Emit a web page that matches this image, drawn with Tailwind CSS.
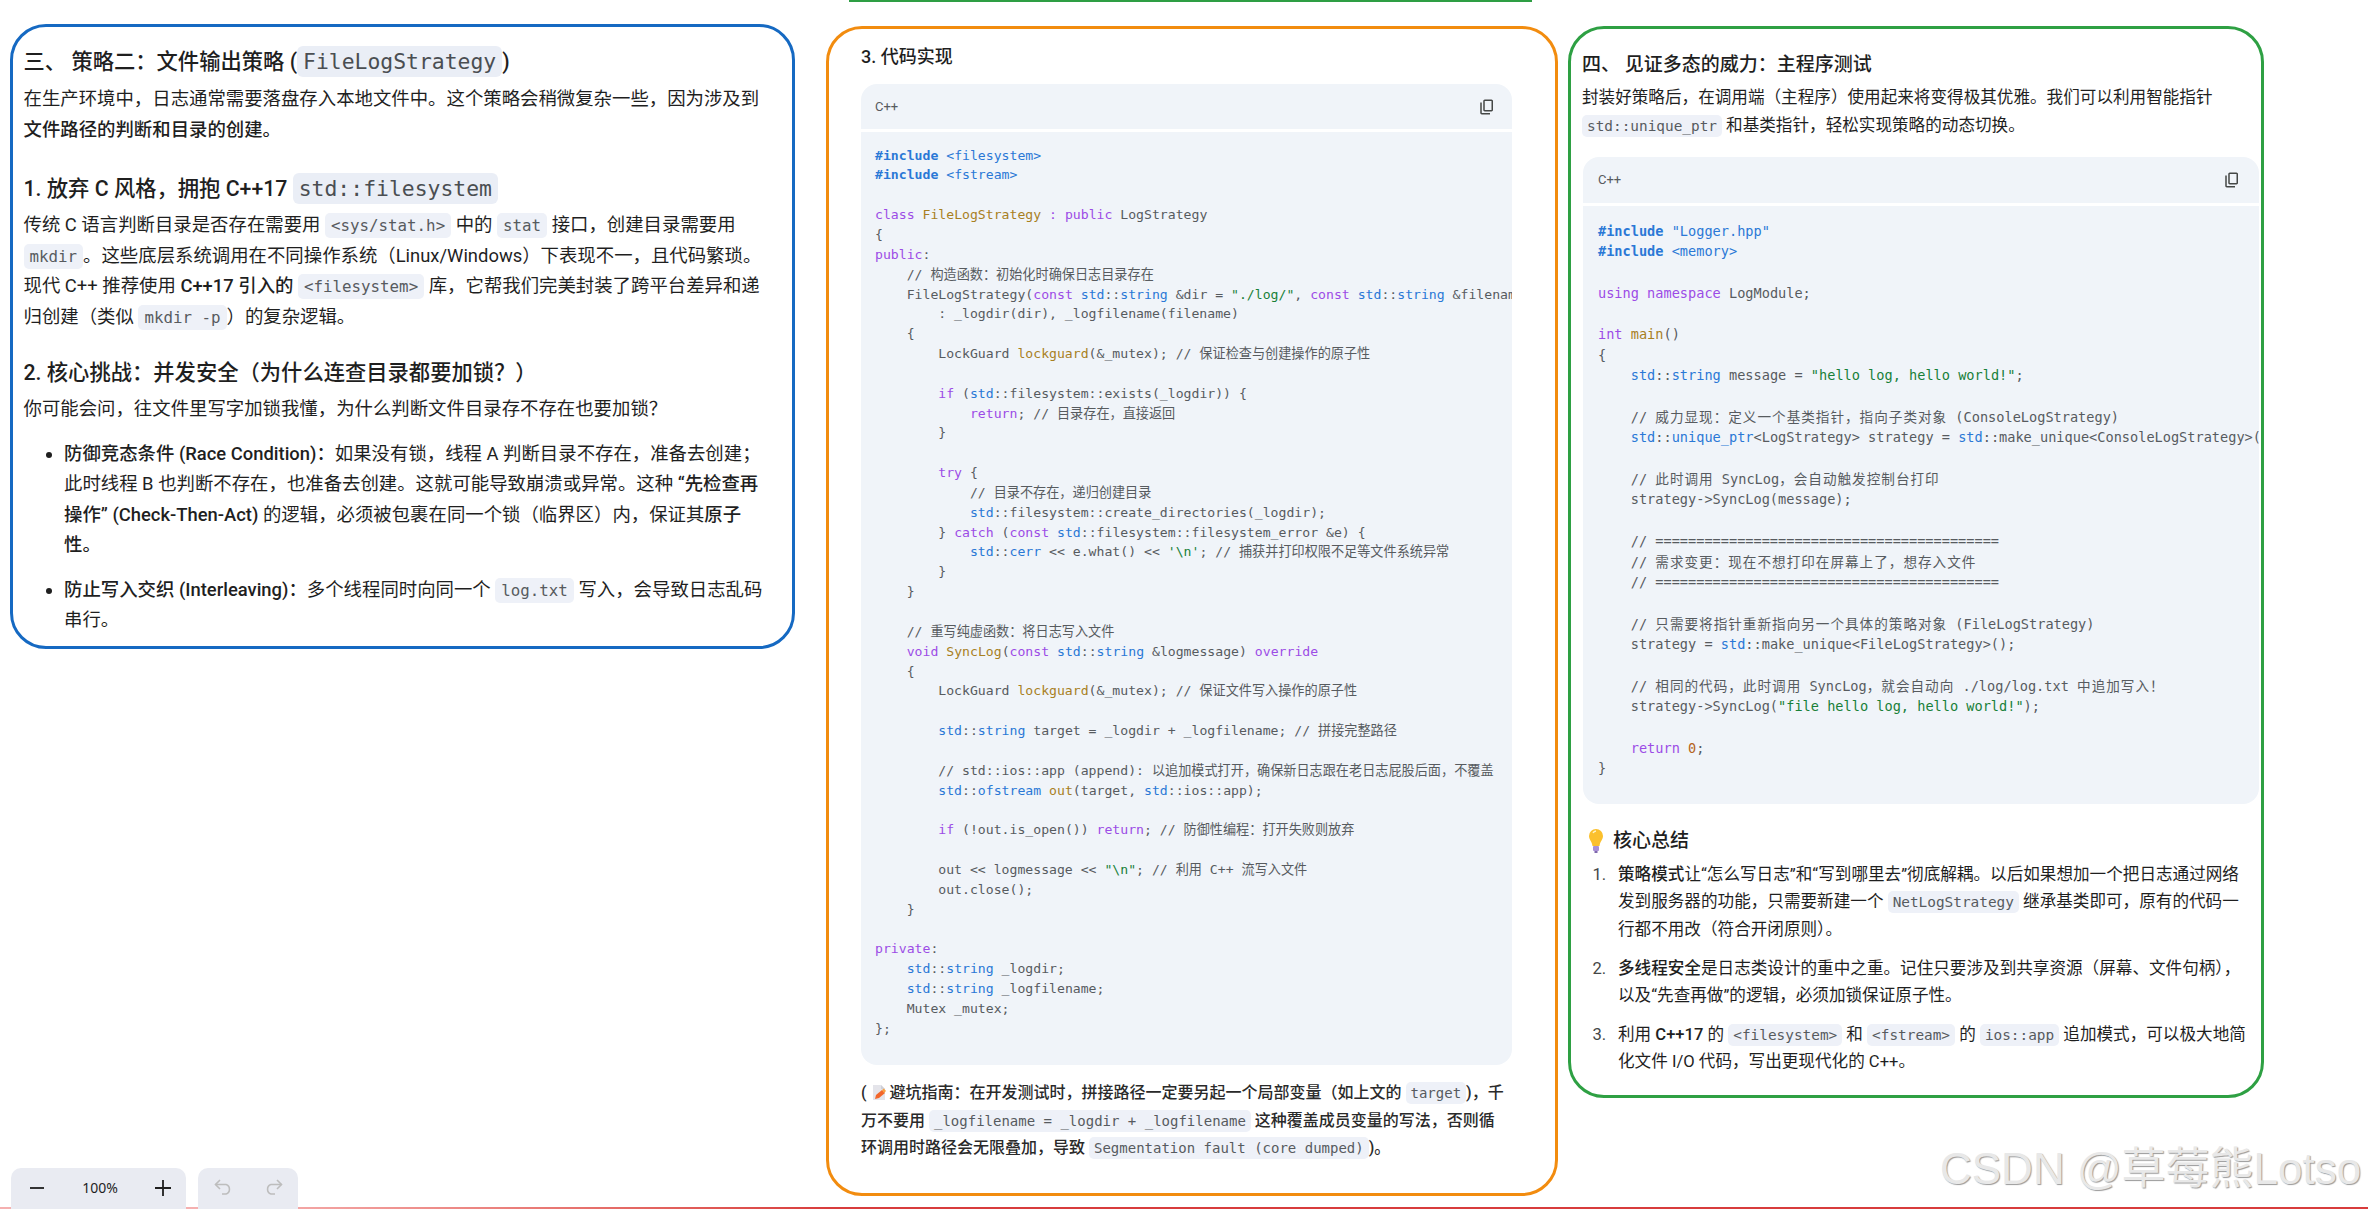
<!doctype html>
<html lang="zh-CN">
<head>
<meta charset="utf-8">
<title>FileLogStrategy</title>
<script src="https://cdn.jsdelivr.net/npm/@tailwindcss/browser@4"></script>
</head>
<body class="m-0 bg-white">
<div class="relative w-[2368px] h-[1209px] overflow-hidden bg-white text-[#1f1f1f] font-['Roboto','Noto_Sans_CJK_SC',sans-serif]">

  <div class="absolute top-0 left-[849px] w-[683px] h-[2px] bg-[#2e9e44]"></div>
  <div class="absolute bottom-0 left-0 w-full h-[2px] bg-linear-to-r from-[#f5b0b0] from-[10%] to-[#d83c3c] to-[35%]"></div>

  <div class="flex items-start pl-[10px] pt-[24px]">

    <!-- Blue panel -->
    <section class="w-[785px] h-[625px] shrink-0 border-[3px] border-[#1569c2] rounded-[36px] pl-[10.5px] pt-[18px] text-[18.4px] leading-[30.5px]">
      <h2 class="text-[21.3px] leading-[34px] font-medium whitespace-nowrap">三、 策略二：文件输出策略 (<code class="leading-none font-['DejaVu_Sans_Mono',monospace] font-normal text-[21.4px] text-[#4a4e52] bg-[#eaeef6] rounded-[6px] px-[6px] py-[3px]">FileLogStrategy</code>)</h2>
      <p class="mt-[5px] whitespace-nowrap">在生产环境中，日志通常需要落盘存入本地文件中。这个策略会稍微复杂一些，因为涉及到<br><strong class="font-medium">文件路径的判断和目录的创建。</strong></p>

      <h3 class="mt-[26.5px] text-[21.3px] leading-[34px] font-medium whitespace-nowrap">1. 放弃 C 风格，拥抱 C++17 <code class="leading-none font-['DejaVu_Sans_Mono',monospace] font-normal text-[21.4px] text-[#4a4e52] bg-[#eaeef6] rounded-[6px] px-[6px] py-[3px]">std::filesystem</code></h3>
      <p class="mt-[4.5px] whitespace-nowrap">传统 C 语言判断目录是否存在需要用 <code class="leading-none font-['DejaVu_Sans_Mono',monospace] text-[15.8px] text-[#575b5f] bg-[#eef1f8] rounded-[5px] px-[6px] py-[3px]">&lt;sys/stat.h&gt;</code> 中的 <code class="leading-none font-['DejaVu_Sans_Mono',monospace] text-[15.8px] text-[#575b5f] bg-[#eef1f8] rounded-[5px] px-[6px] py-[3px]">stat</code> 接口，创建目录需要用<br><code class="leading-none font-['DejaVu_Sans_Mono',monospace] text-[15.8px] text-[#575b5f] bg-[#eef1f8] rounded-[5px] px-[6px] py-[3px]">mkdir</code>。这些底层系统调用在不同操作系统（Linux/Windows）下表现不一，且代码繁琐。<br>现代 C++ 推荐使用 <strong class="font-medium">C++17 引入的</strong> <code class="leading-none font-['DejaVu_Sans_Mono',monospace] text-[15.8px] text-[#575b5f] bg-[#eef1f8] rounded-[5px] px-[6px] py-[3px]">&lt;filesystem&gt;</code> 库，它帮我们完美封装了跨平台差异和递<br>归创建（类似 <code class="leading-none font-['DejaVu_Sans_Mono',monospace] text-[15.8px] text-[#575b5f] bg-[#eef1f8] rounded-[5px] px-[6px] py-[3px]">mkdir -p</code>）的复杂逻辑。</p>

      <h3 class="mt-[24px] text-[21.3px] leading-[34px] font-medium whitespace-nowrap">2. 核心挑战：并发安全（为什么连查目录都要加锁？）</h3>
      <p class="mt-[4px] whitespace-nowrap">你可能会问，往文件里写字加锁我懂，为什么判断文件目录存不存在也要加锁？</p>

      <ul class="mt-[14px] list-disc pl-[40.5px] whitespace-nowrap">
        <li><strong class="font-medium">防御竞态条件 (Race Condition)：</strong>如果没有锁，线程 A 判断目录不存在，准备去创建；<br>此时线程 B 也判断不存在，也准备去创建。这就可能导致崩溃或异常。这种 <strong class="font-medium">“先检查再<br>操作” (Check-Then-Act)</strong> 的逻辑，必须被包裹在同一个锁（临界区）内，保证其<strong class="font-medium">原子<br>性。</strong></li>
        <li class="mt-[14px]"><strong class="font-medium">防止写入交织 (Interleaving)：</strong>多个线程同时向同一个 <code class="leading-none font-['DejaVu_Sans_Mono',monospace] text-[15.8px] text-[#575b5f] bg-[#eef1f8] rounded-[5px] px-[6px] py-[3px]">log.txt</code> 写入，会导致日志乱码<br>串行。</li>
      </ul>
    </section>

    <!-- Orange panel -->
    <section class="ml-[31px] mt-[2px] w-[732px] h-[1170px] shrink-0 border-[3px] border-[#f28c0f] rounded-[36px] pl-[32px] pr-[43px] pt-[12.5px]">
      <h3 class="text-[18px] leading-[30px] font-medium">3. 代码实现</h3>
      <div class="mt-[12.5px]">
        <div class="h-[45px] bg-[#f0f4f9] rounded-t-[16px] flex items-center justify-between pl-[14px] pr-[16px] text-[13px] text-[#575b5f]">
          <span>C++</span>
          <svg class="w-[18px] h-[18px] fill-[#444746]" viewBox="0 0 24 24"><path d="M9 18q-.825 0-1.412-.587T7 16V4q0-.825.588-1.412T9 2h9q.825 0 1.413.588T20 4v12q0 .825-.587 1.413T18 18H9Zm0-2h9V4H9v12Zm-4 6q-.825 0-1.412-.587T3 20V6h2v14h11v2H5Z"/></svg>
        </div>
        <pre class="mt-[3px] h-[933px] overflow-hidden bg-[#f0f4f9] rounded-b-[16px] pl-[14px] pt-[13.6px] font-['DejaVu_Sans_Mono','Noto_Sans_CJK_SC',monospace] text-[13.15px] leading-[19.84px] text-[#575b5f]"><span class="text-[#2a78d6] font-bold">#include</span> <span class="text-[#2a78d6]">&lt;filesystem&gt;</span>
<span class="text-[#2a78d6] font-bold">#include</span> <span class="text-[#2a78d6]">&lt;fstream&gt;</span>

<span class="text-[#9c4ce6]">class</span> <span class="text-[#a8801f]">FileLogStrategy</span> <span class="text-[#9c4ce6]">:</span> <span class="text-[#9c4ce6]">public</span> LogStrategy
{
<span class="text-[#9c4ce6]">public</span>:
    // 构造函数：初始化时确保日志目录存在
    FileLogStrategy(<span class="text-[#9c4ce6]">const</span> <span class="text-[#2a78d6]">std</span>::<span class="text-[#2a78d6]">string</span> &amp;dir = <span class="text-[#188038]">"./log/"</span>, <span class="text-[#9c4ce6]">const</span> <span class="text-[#2a78d6]">std</span>::<span class="text-[#2a78d6]">string</span> &amp;filename = <span class="text-[#188038]">"log.txt"</span>)
        : _logdir(dir), _logfilename(filename)
    {
        LockGuard <span class="text-[#a8801f]">lockguard</span>(&amp;_mutex); // 保证检查与创建操作的原子性

        <span class="text-[#9c4ce6]">if</span> (<span class="text-[#2a78d6]">std</span>::filesystem::exists(_logdir)) {
            <span class="text-[#9c4ce6]">return</span>; // 目录存在，直接返回
        }

        <span class="text-[#9c4ce6]">try</span> {
            // 目录不存在，递归创建目录
            <span class="text-[#2a78d6]">std</span>::filesystem::create_directories(_logdir);
        } <span class="text-[#9c4ce6]">catch</span> (<span class="text-[#9c4ce6]">const</span> <span class="text-[#2a78d6]">std</span>::filesystem::filesystem_error &amp;e) {
            <span class="text-[#2a78d6]">std</span>::<span class="text-[#2a78d6]">cerr</span> &lt;&lt; e.what() &lt;&lt; <span class="text-[#188038]">'\n'</span>; // 捕获并打印权限不足等文件系统异常
        }
    }

    // 重写纯虚函数：将日志写入文件
    <span class="text-[#9c4ce6]">void</span> <span class="text-[#a8801f]">SyncLog</span>(<span class="text-[#9c4ce6]">const</span> <span class="text-[#2a78d6]">std</span>::<span class="text-[#2a78d6]">string</span> &amp;logmessage) <span class="text-[#9c4ce6]">override</span>
    {
        LockGuard <span class="text-[#a8801f]">lockguard</span>(&amp;_mutex); // 保证文件写入操作的原子性

        <span class="text-[#2a78d6]">std</span>::<span class="text-[#2a78d6]">string</span> target = _logdir + _logfilename; // 拼接完整路径

        // std::ios::app (append): 以追加模式打开，确保新日志跟在老日志屁股后面，不覆盖
        <span class="text-[#2a78d6]">std</span>::<span class="text-[#2a78d6]">ofstream</span> <span class="text-[#a8801f]">out</span>(target, <span class="text-[#2a78d6]">std</span>::ios::app);

        <span class="text-[#9c4ce6]">if</span> (!out.is_open()) <span class="text-[#9c4ce6]">return</span>; // 防御性编程：打开失败则放弃

        out &lt;&lt; logmessage &lt;&lt; <span class="text-[#188038]">"\n"</span>; // 利用 C++ 流写入文件
        out.close();
    }

<span class="text-[#9c4ce6]">private</span>:
    <span class="text-[#2a78d6]">std</span>::<span class="text-[#2a78d6]">string</span> _logdir;
    <span class="text-[#2a78d6]">std</span>::<span class="text-[#2a78d6]">string</span> _logfilename;
    Mutex _mutex;
};</pre>
      </div>
      <p class="mt-[14px] text-[16px] leading-[27.5px] font-medium whitespace-nowrap text-[#2a2a2a]">( <svg class="inline-block align-[-3px] w-[16px] h-[17px] mr-[3px]" viewBox="0 0 16 17"><path d="M2 1h8l4 4v11H2z" fill="#e4e4ea"/><path d="M10 1l4 4h-4z" fill="#cfcfd6"/><path d="M4 15l1-4 6-5 3 3-6 5z" fill="#f2662b"/><path d="M11 6l2-1.500 2 2.500-2 2z" fill="#f9a03f"/></svg>避坑指南：在开发测试时，拼接路径一定要另起一个局部变量（如上文的 <code class="leading-none font-['DejaVu_Sans_Mono',monospace] font-normal text-[14px] text-[#575b5f] bg-[#eef1f8] rounded-[5px] px-[5px] py-[3px]">target</code>)，千<br>万不要用 <code class="leading-none font-['DejaVu_Sans_Mono',monospace] font-normal text-[14px] text-[#575b5f] bg-[#eef1f8] rounded-[5px] px-[5px] py-[3px]">_logfilename = _logdir + _logfilename</code> 这种覆盖成员变量的写法，否则循<br>环调用时路径会无限叠加，导致 <code class="leading-none font-['DejaVu_Sans_Mono',monospace] font-normal text-[14px] text-[#575b5f] bg-[#eef1f8] rounded-[5px] px-[5px] py-[3px]">Segmentation fault (core dumped)</code>)。</p>
    </section>

    <!-- Green panel -->
    <section class="ml-[10px] mt-[2px] w-[696px] h-[1072px] shrink-0 border-[3px] border-[#2ea043] rounded-[36px] pl-[11px] pr-[2px] pt-[20.5px]">
      <h2 class="text-[19px] leading-[30px] font-medium whitespace-nowrap">四、 见证多态的威力：主程序测试</h2>
      <p class="mt-[4px] text-[16.6px] leading-[28.5px] whitespace-nowrap">封装好策略后，在调用端（主程序）使用起来将变得极其优雅。我们可以利用智能指针<br><code class="leading-none font-['DejaVu_Sans_Mono',monospace] text-[14.4px] text-[#575b5f] bg-[#eef1f8] rounded-[5px] px-[5px] py-[3px]">std::unique_ptr</code> 和基类指针，轻松实现策略的动态切换。</p>
      <div class="mt-[16px] ml-[1px]">
        <div class="h-[46.500px] bg-[#f0f4f9] rounded-t-[16px] flex items-center justify-between pl-[15px] pr-[18px] text-[13px] text-[#575b5f]">
          <span>C++</span>
          <svg class="w-[18px] h-[18px] fill-[#444746]" viewBox="0 0 24 24"><path d="M9 18q-.825 0-1.412-.587T7 16V4q0-.825.588-1.412T9 2h9q.825 0 1.413.588T20 4v12q0 .825-.587 1.413T18 18H9Zm0-2h9V4H9v12Zm-4 6q-.825 0-1.412-.587T3 20V6h2v14h11v2H5Z"/></svg>
        </div>
        <pre class="mt-[2.500px] h-[598.400px] overflow-hidden bg-[#f0f4f9] rounded-b-[16px] pl-[15px] pt-[15px] font-['DejaVu_Sans_Mono','Noto_Sans_CJK_SC',monospace] text-[13.6px] leading-[20.68px] text-[#575b5f]"><span class="text-[#2a78d6] font-bold">#include</span> <span class="text-[#2a78d6]">"Logger.hpp"</span>
<span class="text-[#2a78d6] font-bold">#include</span> <span class="text-[#2a78d6]">&lt;memory&gt;</span>

<span class="text-[#9c4ce6]">using</span> <span class="text-[#9c4ce6]">namespace</span> LogModule;

<span class="text-[#9c4ce6]">int</span> <span class="text-[#a8801f]">main</span>()
{
    <span class="text-[#2a78d6]">std</span>::<span class="text-[#2a78d6]">string</span> message = <span class="text-[#188038]">"hello log, hello world!"</span>;

    // <span class="tracking-[1px]">威力显现：定义一个基类指针，指向子类对象</span> (ConsoleLogStrategy)
    <span class="text-[#2a78d6]">std</span>::<span class="text-[#2a78d6]">unique_ptr</span>&lt;LogStrategy&gt; strategy = <span class="text-[#2a78d6]">std</span>::make_unique&lt;ConsoleLogStrategy&gt;();

    // <span class="tracking-[1px]">此时调用</span> SyncLog<span class="tracking-[1px]">，会自动触发控制台打印</span>
    strategy-&gt;SyncLog(message);

    // ==========================================
    // <span class="tracking-[1px]">需求变更：现在不想打印在屏幕上了，想存入文件</span>
    // ==========================================

    // <span class="tracking-[1px]">只需要将指针重新指向另一个具体的策略对象</span> (FileLogStrategy)
    strategy = <span class="text-[#2a78d6]">std</span>::make_unique&lt;FileLogStrategy&gt;();

    // <span class="tracking-[1px]">相同的代码，此时调用</span> SyncLog<span class="tracking-[1px]">，就会自动向</span> ./log/log.txt <span class="tracking-[1px]">中追加写入！</span>
    strategy-&gt;SyncLog(<span class="text-[#188038]">"file hello log, hello world!"</span>);

    <span class="text-[#9c4ce6]">return</span> <span class="text-[#b5651d]">0</span>;
}</pre>
      </div>
      <h3 class="mt-[22.500px] text-[19px] leading-[30px] font-medium flex items-center gap-[9px] pl-[6px] whitespace-nowrap"><svg class="w-[16px] h-[26px]" viewBox="0 0 16 26"><path d="M8 1a7 7 0 0 0-7 7c0 3.500 3 5.500 3.500 10h7C12 13.500 15 11.500 15 8a7 7 0 0 0-7-7z" fill="#fbc02d"/><path d="M5 5a4 4 0 0 1 3-2" stroke="#fff3c4" stroke-width="1.500" fill="none"/><rect x="5" y="18" width="6" height="5" rx="1" fill="#a98fd6"/><rect x="6.500" y="23" width="3" height="2" fill="#7e67ad"/></svg>核心总结</h3>
      <ol class="mt-[4.500px] text-[16.6px] leading-[27.5px] whitespace-nowrap">
        <li class="flex pl-[10.500px]"><span class="w-[25.500px] shrink-0 text-[#444746]">1.</span><span><strong class="font-medium">策略模式</strong>让“怎么写日志”和“写到哪里去”彻底解耦。以后如果想加一个把日志通过网络<br>发到服务器的功能，只需要新建一个 <code class="leading-none font-['DejaVu_Sans_Mono',monospace] text-[14.4px] text-[#575b5f] bg-[#eef1f8] rounded-[5px] px-[5px] py-[3px]">NetLogStrategy</code> 继承基类即可，原有的代码一<br>行都不用改（符合开闭原则）。</span></li>
        <li class="flex pl-[10.500px] mt-[11.500px]"><span class="w-[25.500px] shrink-0 text-[#444746]">2.</span><span><strong class="font-medium">多线程安全</strong>是日志类设计的重中之重。记住只要涉及到共享资源（屏幕、文件句柄），<br>以及“先查再做”的逻辑，必须加锁保证原子性。</span></li>
        <li class="flex pl-[10.500px] mt-[11px]"><span class="w-[25.500px] shrink-0 text-[#444746]">3.</span><span>利用 <strong class="font-medium">C++17</strong> 的 <code class="leading-none font-['DejaVu_Sans_Mono',monospace] text-[14.4px] text-[#575b5f] bg-[#eef1f8] rounded-[5px] px-[5px] py-[3px]">&lt;filesystem&gt;</code> 和 <code class="leading-none font-['DejaVu_Sans_Mono',monospace] text-[14.4px] text-[#575b5f] bg-[#eef1f8] rounded-[5px] px-[5px] py-[3px]">&lt;fstream&gt;</code> 的 <code class="leading-none font-['DejaVu_Sans_Mono',monospace] text-[14.4px] text-[#575b5f] bg-[#eef1f8] rounded-[5px] px-[5px] py-[3px]">ios::app</code> 追加模式，可以极大地简<br>化文件 I/O 代码，写出更现代化的 C++。</span></li>
      </ol>
    </section>
  </div>

  <!-- Floating zoom / history toolbars -->
  <div class="absolute left-[11px] bottom-0 flex gap-[12px]">
    <div class="w-[175px] h-[41px] bg-[#e9ebf2] rounded-t-[10px] flex items-center justify-between pl-[17px] pr-[14px] pb-[2px] text-[14px] text-[#1f1f1f]">
      <svg class="w-[18px] h-[18px]" viewBox="0 0 18 18"><path d="M2 9h14" stroke="#1f1f1f" stroke-width="1.800"/></svg>
      <span class="font-['Noto_Sans',sans-serif]">100%</span>
      <svg class="w-[18px] h-[18px]" viewBox="0 0 18 18"><path d="M1 9h16M9 1v16" stroke="#1f1f1f" stroke-width="1.800"/></svg>
    </div>
    <div class="w-[100px] h-[41px] bg-[#e9ebf2] rounded-t-[10px] flex items-center justify-between pl-[16px] pr-[15px] pb-[4px]">
      <svg class="w-[19px] h-[16px]" viewBox="0 0 19 16" fill="none" stroke="#bdbdbd" stroke-width="1.600"><path d="M6 1 1.500 5.500 6 10"/><path d="M1.500 5.500H12a5 5 0 0 1 0 9.500H8"/></svg>
      <svg class="w-[19px] h-[16px]" viewBox="0 0 19 16" fill="none" stroke="#bdbdbd" stroke-width="1.600"><path d="M13 1l4.500 4.500L13 10"/><path d="M17.500 5.500H7a5 5 0 0 0 0 9.500h4"/></svg>
    </div>
  </div>

  <!-- Watermark -->
  <div class="absolute left-[1940px] top-[1142px] text-[44px] leading-[54px] whitespace-nowrap text-[#e8e8e8] [text-shadow:1px_1px_1px_#9a9a9a] font-['Liberation_Sans','Noto_Sans_CJK_SC',sans-serif]">CSDN @草莓熊Lotso</div>
</div>
</body>
</html>
